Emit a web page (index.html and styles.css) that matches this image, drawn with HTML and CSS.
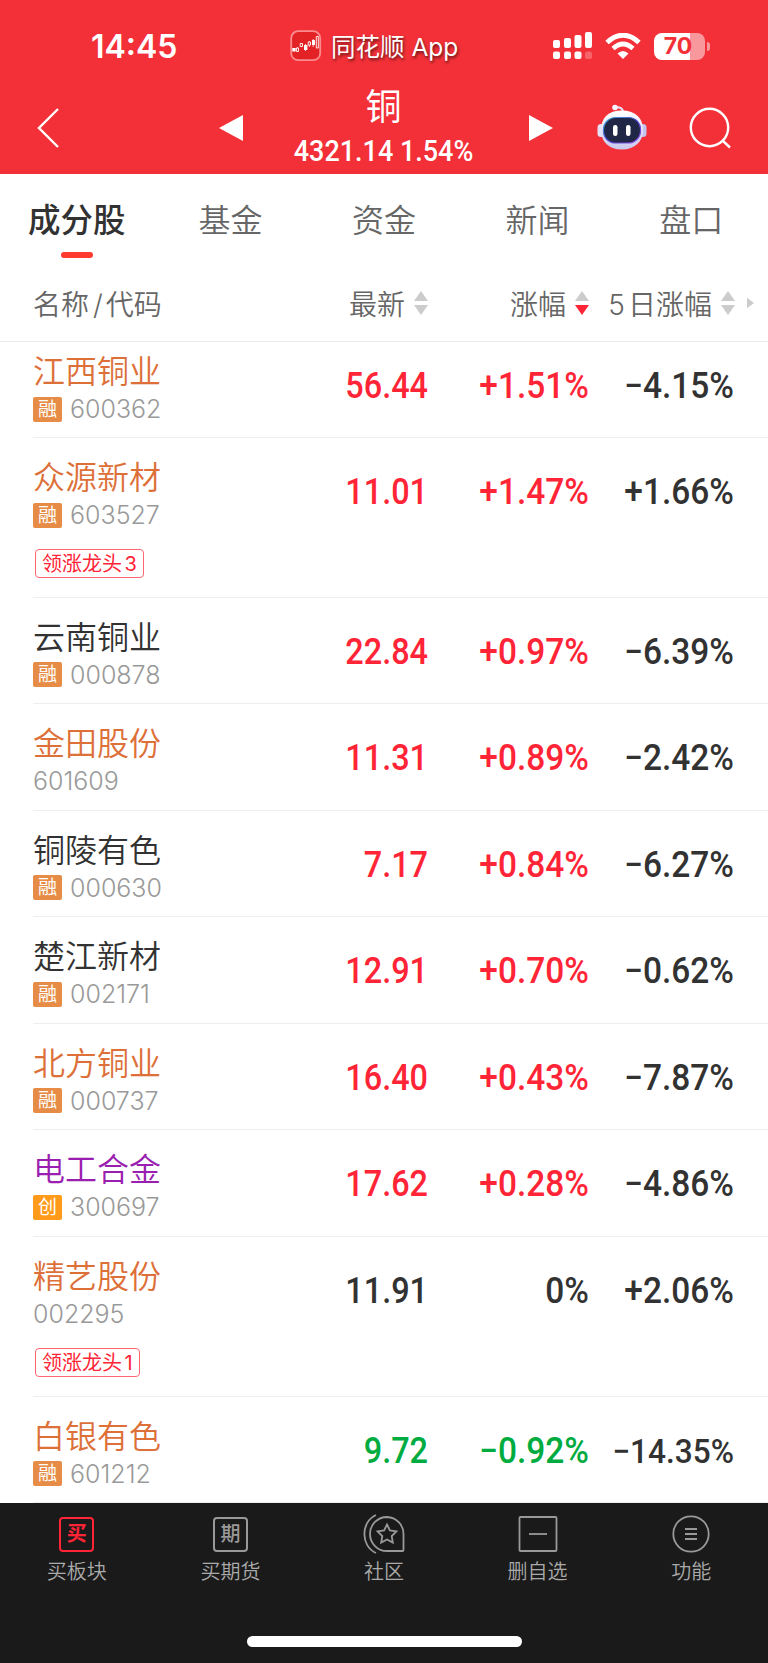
FILE: index.html
```html
<!DOCTYPE html>
<html lang="zh-CN">
  <head>
    <meta charset="UTF-8" />
    <meta name="viewport" content="width=device-width, initial-scale=1.0" />
    <title>铜 - 成分股</title>
    <link rel="stylesheet" href="styles.css">
  </head>
  <body>
    <header class="header">
      <div class="status-bar">
        <div class="time">14:45</div>
        <div class="app-return">
          <svg class="app-icon" viewBox="0 0 32 32">
            <rect x="1.2" y="1.2" width="29" height="29" rx="7" fill="#e32226" stroke="#f98b8d" stroke-width="1.8" />
            <path d="M7.5 17v5M11.3 13v3M15.5 14v7M19.3 11v6M23.2 9v8" stroke="#fff" stroke-width="0.8" />
            <path d="M2.3 18h3.4v3.500H2.300zM14 15h3.400v5H14zM22 10h3v5h-3z" fill="#fff" />
            <path d="M6.500 18h2v3.500h-2zM10.200 13.500h2.300v3h-2.300zM18.200 12h2.300v3h-2.300zM26.300 6.500h2v11.500h-2z" fill="#e32226" stroke="#fff" stroke-width="0.9" />
          </svg>
          <span class="app-name">同花顺 App</span>
        </div>
        <div class="system-icons">
          <svg class="signal" viewBox="0 0 40 28" fill="#fff">
            <rect x="0" y="8" width="7" height="8" rx="2" />
            <rect x="11" y="6" width="7" height="10" rx="2" />
            <rect x="21.5" y="3" width="7" height="13" rx="2" />
            <rect x="32" y="0" width="7" height="16" rx="2" />
            <rect x="0" y="19.5" width="7" height="7.5" rx="2" />
            <rect x="11" y="19.5" width="7" height="7.5" rx="2" />
            <rect x="21.5" y="19.5" width="7" height="7.5" rx="2" />
            <rect x="32" y="19.5" width="7" height="7.5" rx="2" opacity="0.25" />
          </svg>
          <svg class="wifi" viewBox="0 0 36 27">
            <path d="M2 9.5Q18 -5 34 9.5" fill="none" stroke="#fff" stroke-width="5" />
            <path d="M8 15.5Q18 6.500 28 15.5" fill="none" stroke="#fff" stroke-width="4.6" />
            <path d="M12.5 20.5Q18 15.500 23.500 20.500L18 26z" fill="#fff" />
          </svg>
          <div class="battery">
            <div class="battery-body">70</div>
            <div class="battery-cap"></div>
          </div>
        </div>
      </div>
      <div class="nav-bar">
        <svg class="back" viewBox="0 0 24 42"><path d="M22 2L3 21l19 19" /></svg>
        <svg class="prev" viewBox="0 0 24 26"><path d="M0 13L24 0v26z" /></svg>
        <div class="title">
          <h1>铜</h1>
          <p class="num">4321.14 1.54%</p>
        </div>
        <svg class="next" viewBox="0 0 24 26"><path d="M24 13L0 0v26z" /></svg>
        <svg class="robot" viewBox="0 0 50 46">
          <defs>
            <linearGradient id="shell" x1="0" y1="0" x2="0" y2="1">
              <stop offset="0" stop-color="#fff" />
              <stop offset="1" stop-color="#c9c8ee" />
            </linearGradient>
            <linearGradient id="visor" x1="0" y1="0" x2="1" y2="1">
              <stop offset="0" stop-color="#4bb6dc" />
              <stop offset="0.5" stop-color="#4a3fd0" />
              <stop offset="1" stop-color="#9a55e6" />
            </linearGradient>
          </defs>
          <path d="M18 3.5q7 -1 8 4" fill="none" stroke="#e6e3fa" stroke-width="2" />
          <circle cx="18" cy="3.5" r="2.8" fill="#f6f3ff" />
          <rect x="0.5" y="20" width="7" height="13" rx="3.5" fill="#e3e2fa" />
          <rect x="42.5" y="20" width="7" height="13" rx="3.5" fill="#c4c4ee" />
          <path d="M25 6.5c14 0 21 8 21 19.500S38 45.500 25 45.500 4 38 4 26 11 6.500 25 6.500z" fill="url(#shell)" />
          <rect x="6.500" y="13.500" width="37" height="25.500" rx="12" fill="#202746" stroke="url(#visor)" stroke-width="1.2" />
          <rect x="16" y="21" width="4.5" height="11" rx="2.2" fill="#fff" />
          <rect x="29" y="21" width="4.5" height="11" rx="2.2" fill="#fff" />
        </svg>
        <svg class="search" viewBox="0 0 42 42">
          <circle cx="20.5" cy="20.5" r="18.7" />
          <path d="M33.5 33.500L41 40.500" />
        </svg>
      </div>
    </header>

    <nav class="tabs">
      <a class="tab active">成分股</a>
      <a class="tab">基金</a>
      <a class="tab">资金</a>
      <a class="tab">新闻</a>
      <a class="tab">盘口</a>
    </nav>

    <div class="table-head">
      <div class="th-name">名称<span class="slash">/</span>代码</div>
      <div class="th">最新<svg class="sort" viewBox="0 0 14 24"><path d="M7 0l7 10H0z" /><path d="M7 24l7-10H0z" /></svg></div>
      <div class="th">涨幅<svg class="sort desc" viewBox="0 0 14 24"><path d="M7 0l7 10H0z" /><path class="down" d="M7 24l7-10H0z" /></svg></div>
      <div class="th"><span><span class="five">5</span>日涨幅</span><svg class="sort" viewBox="0 0 14 24"><path d="M7 0l7 10H0z" /><path d="M7 24l7-10H0z" /></svg></div>
      <svg class="more" viewBox="0 0 8 12"><path d="M0 0l8 6-8 6z" /></svg>
    </div>

    <main class="stocks">
      <div class="stock first">
        <div class="info">
          <div class="name margin">江西铜业</div>
          <div class="code"><span class="badge">融</span>600362</div>
        </div>
        <div class="num up">56.44</div>
        <div class="num up">+1.51%</div>
        <div class="num">−4.15%</div>
      </div>
      <div class="stock tall">
        <div class="info">
          <div class="name margin">众源新材</div>
          <div class="code"><span class="badge">融</span>603527</div>
          <div class="tag">领涨龙头 3</div>
        </div>
        <div class="num up">11.01</div>
        <div class="num up">+1.47%</div>
        <div class="num">+1.66%</div>
      </div>
      <div class="stock">
        <div class="info">
          <div class="name">云南铜业</div>
          <div class="code"><span class="badge">融</span>000878</div>
        </div>
        <div class="num up">22.84</div>
        <div class="num up">+0.97%</div>
        <div class="num">−6.39%</div>
      </div>
      <div class="stock">
        <div class="info">
          <div class="name margin">金田股份</div>
          <div class="code">601609</div>
        </div>
        <div class="num up">11.31</div>
        <div class="num up">+0.89%</div>
        <div class="num">−2.42%</div>
      </div>
      <div class="stock">
        <div class="info">
          <div class="name">铜陵有色</div>
          <div class="code"><span class="badge">融</span>000630</div>
        </div>
        <div class="num up">7.17</div>
        <div class="num up">+0.84%</div>
        <div class="num">−6.27%</div>
      </div>
      <div class="stock">
        <div class="info">
          <div class="name">楚江新材</div>
          <div class="code"><span class="badge">融</span>002171</div>
        </div>
        <div class="num up">12.91</div>
        <div class="num up">+0.70%</div>
        <div class="num">−0.62%</div>
      </div>
      <div class="stock">
        <div class="info">
          <div class="name margin">北方铜业</div>
          <div class="code"><span class="badge">融</span>000737</div>
        </div>
        <div class="num up">16.40</div>
        <div class="num up">+0.43%</div>
        <div class="num">−7.87%</div>
      </div>
      <div class="stock">
        <div class="info">
          <div class="name growth">电工合金</div>
          <div class="code"><span class="badge badge-growth">创</span>300697</div>
        </div>
        <div class="num up">17.62</div>
        <div class="num up">+0.28%</div>
        <div class="num">−4.86%</div>
      </div>
      <div class="stock tall">
        <div class="info">
          <div class="name margin">精艺股份</div>
          <div class="code">002295</div>
          <div class="tag">领涨龙头 1</div>
        </div>
        <div class="num">11.91</div>
        <div class="num">0%</div>
        <div class="num">+2.06%</div>
      </div>
      <div class="stock">
        <div class="info">
          <div class="name margin">白银有色</div>
          <div class="code"><span class="badge">融</span>601212</div>
        </div>
        <div class="num down">9.72</div>
        <div class="num down">−0.92%</div>
        <div class="num small">−14.35%</div>
      </div>
    </main>

    <footer class="bottom-bar">
      <div class="actions">
        <div class="action">
          <div class="action-icon"><span class="char-icon buy">买</span></div>
          买板块
        </div>
        <div class="action">
          <div class="action-icon"><span class="char-icon">期</span></div>
          买期货
        </div>
        <div class="action">
          <svg class="action-icon" viewBox="0 0 42 40">
            <path d="M13 1C-2.5 8-2.5 32 13 39" />
            <path d="M24 3a17 17 0 1 0 0 34h15.500q1 0 1-1V20A17 17 0 0 0 24 3z" />
            <path d="M24 10.500l2.900 5.900 6.500 1-4.700 4.600 1.100 6.500-5.800-3.100-5.800 3.100 1.100-6.500-4.700-4.600 6.500-1z" />
          </svg>
          社区
        </div>
        <div class="action">
          <svg class="action-icon" viewBox="0 0 42 40">
            <rect x="2.5" y="3" width="37" height="34" rx="1" />
            <path d="M12 20h18" />
          </svg>
          删自选
        </div>
        <div class="action">
          <svg class="action-icon" viewBox="0 0 42 40">
            <circle cx="21" cy="20" r="17.7" />
            <path d="M15 15h12M15 20h12M15 25h12" />
          </svg>
          功能
        </div>
      </div>
      <div class="home-indicator"></div>
    </footer>
  </body>
</html>
```

FILE: styles.css
```css
* {
  box-sizing: border-box;
}
body {
  margin: 0;
  width: 768px;
  height: 1663px;
  display: flex;
  flex-direction: column;
  background: #fff;
  color: #323232;
  font-family: Inter, "Noto Sans CJK SC", sans-serif;
  overflow: hidden;
}
svg {
  display: block;
  flex: none;
}

/* header */
.header {
  height: 174px;
  background: #f33038;
  color: #fff;
}
.status-bar {
  height: 92px;
  display: grid;
  grid-template-columns: 290px 263px 1fr;
  align-items: center;
}
.time {
  padding-left: 91px;
  font-size: 32px;
  font-weight: 600;
}
.app-return {
  display: flex;
  align-items: center;
  gap: 9px;
}
.app-icon {
  width: 32px;
  height: 32px;
}
.app-name {
  padding-top: 2px;
  font-size: 24.5px;
  line-height: 32px;
  text-shadow: 1px 2px 3px rgba(0, 0, 0, 0.6);
}
.system-icons {
  display: flex;
  align-items: center;
}
.signal {
  width: 40px;
  height: 28px;
}
.wifi {
  width: 36px;
  height: 27px;
  margin-left: 12px;
}
.battery {
  display: flex;
  align-items: center;
  gap: 2px;
  margin-left: 13px;
}
.battery-body {
  width: 51px;
  height: 27px;
  padding-right: 3px;
  border-radius: 8px;
  background: linear-gradient(90deg, #fff 36px, #f9989c 36px);
  color: #f33038;
  font-size: 23px;
  font-weight: 700;
  line-height: 27px;
  text-align: center;
}
.battery-cap {
  width: 3px;
  height: 9px;
  border-radius: 0 3px 3px 0;
  background: #f9989c;
}
.nav-bar {
  height: 82px;
  display: flex;
  align-items: flex-start;
  padding-left: 36px;
}
.back,
.search {
  fill: none;
  stroke: #fff;
  stroke-width: 2.4;
}
.back {
  width: 24px;
  height: 42px;
  margin-top: 15px;
}
.prev,
.next {
  width: 24px;
  height: 26px;
  margin-top: 23px;
  fill: #fff;
}
.prev {
  margin-left: 159px;
}
.title {
  width: 286px;
  padding-right: 5px;
  text-align: center;
}
.title h1 {
  margin: 0;
  font-size: 36px;
  font-weight: 400;
  line-height: 30px;
}
.title .num {
  margin: 12px 0 0;
  padding: 0;
  color: #fff;
  font-size: 29px;
  line-height: 34px;
  text-align: center;
  transform-origin: center;
}
.robot {
  width: 50px;
  height: 46px;
  margin: 12px 0 0 44px;
}
.search {
  width: 42px;
  height: 42px;
  margin: 15px 0 0 42px;
}

/* tabs */
.tabs {
  height: 94px;
  display: grid;
  grid-template-columns: repeat(5, 1fr);
}
.tab {
  display: flex;
  flex-direction: column;
  align-items: center;
  padding-top: 23px;
  color: #666;
  font-size: 32px;
  font-weight: 350;
  line-height: 48px;
}
.tab.active {
  color: #323232;
  font-size: 32.5px;
  font-weight: 500;
}
.tab.active::after {
  content: "";
  width: 32px;
  height: 6px;
  margin-top: 7px;
  border-radius: 3px;
  background: #ff3b30;
}

/* table */
.table-head {
  height: 74px;
  display: flex;
  align-items: center;
  justify-content: flex-end;
  padding: 0 14px 3px 33px;
  border-bottom: 1px solid #ebebeb;
  color: #666;
  font-size: 28px;
  font-weight: 350;
}
.th-name {
  flex: 1;
}
.slash {
  margin: 0 3px 0 4px;
}
.five {
  margin-right: 3px;
}
.th {
  width: 161px;
  display: flex;
  align-items: center;
  justify-content: flex-end;
  gap: 9px;
  white-space: nowrap;
}
.th:nth-child(4) {
  width: 146px;
}
.sort {
  width: 14px;
  height: 24px;
  fill: #ccc;
}
.sort .down {
  fill: #ff2436;
}
.more {
  width: 7px;
  height: 12px;
  margin-left: 12px;
  fill: #ccc;
}
.stocks {
  height: 1161px;
  padding-left: 33px;
  overflow: hidden;
}
.stock {
  height: 106.5px;
  display: grid;
  grid-template-columns: 1fr 161px 161px 145px;
  padding: 16px 34px 0 0;
  border-bottom: 1px solid #eee;
}
.stock.first {
  height: 96.3px;
  padding-top: 6px;
}
.stock.tall {
  height: 159.7px;
}
.name {
  font-size: 32px;
  font-weight: 350;
  line-height: 48px;
}
.name.margin {
  color: #dd6f38;
}
.name.growth {
  color: #9a1fb0;
}
.code {
  height: 26px;
  display: flex;
  align-items: center;
  gap: 8px;
  color: #999;
  font-size: 25px;
  font-weight: 350;
}
.badge {
  width: 29px;
  height: 25px;
  border-radius: 2px;
  background: #e68c46;
  color: #fff;
  font-size: 19px;
  font-weight: 400;
  line-height: 25px;
  text-align: center;
}
.badge-growth {
  background: #ff9a1a;
}
.tag {
  width: fit-content;
  height: 29px;
  margin: 21px 0 0 2px;
  padding: 0 6px;
  border: 1px solid #ff6672;
  border-radius: 4px;
  color: #ff2436;
  font-size: 20px;
  line-height: 28px;
  word-spacing: -3px;
}
.num {
  padding-top: 17px;
  color: #323232;
  font-family: Roboto, sans-serif;
  font-size: 36px;
  font-weight: 500;
  line-height: 42px;
  text-align: right;
  white-space: nowrap;
  transform: scaleX(0.93);
  transform-origin: right;
}
.stock .num:nth-child(2) {
  transform: scaleX(0.9);
}
.num.up {
  color: #ff2436;
}
.num.down {
  color: #00ab3f;
}
.num.small {
  font-size: 34px;
}

/* bottom bar */
.bottom-bar {
  height: 160px;
  display: flex;
  flex-direction: column;
  align-items: center;
  justify-content: space-between;
  padding: 11px 0 16px;
  background: #1a1a1a;
}
.actions {
  width: 100%;
  display: grid;
  grid-template-columns: repeat(5, 1fr);
}
.action {
  display: flex;
  flex-direction: column;
  align-items: center;
  gap: 3px;
  color: #aaa;
  font-size: 20px;
  font-weight: 350;
  line-height: 30px;
}
.action-icon {
  width: 42px;
  height: 40px;
  display: flex;
  align-items: center;
  justify-content: center;
  fill: none;
  stroke: #999;
  stroke-width: 1.8;
}
.char-icon {
  width: 35px;
  height: 35px;
  border: 2px solid #999;
  border-radius: 4px;
  color: #999;
  font-size: 20px;
  font-weight: 500;
  line-height: 31px;
  text-align: center;
}
.char-icon.buy {
  border-color: #ff2436;
  color: #ff2436;
  font-weight: 700;
}
.home-indicator {
  width: 275px;
  height: 11px;
  border-radius: 6px;
  background: #fff;
}
```
